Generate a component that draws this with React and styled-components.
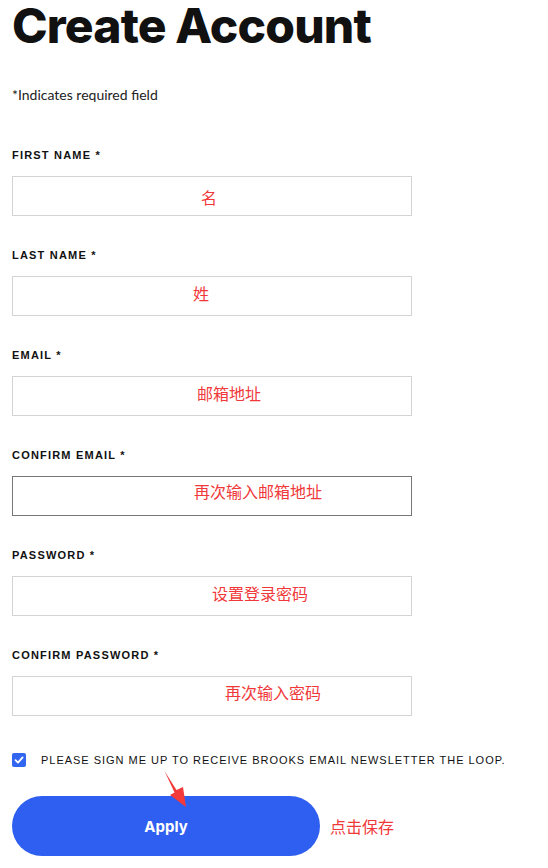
import React from 'react'
import styled, { createGlobalStyle } from 'styled-components'

const GlobalStyle = createGlobalStyle`
body {
    margin: 0;
    background: #fff;
    font-family: "Liberation Sans", Arial, sans-serif;
    color: #111;
}
`

const Page = styled.div`
position: relative;
width: 548px;
height: 868px;
padding: 0 12px;
box-sizing: border-box;
overflow: hidden;
`

const Title = styled.h1`
margin: 0;
padding-top: 2px;
font-family: "Inter", sans-serif;
font-weight: 800;
font-size: 48px;
line-height: 48px;
letter-spacing: -0.85px;
color: #111;
`

const Note = styled.p`
margin: 36px 0 0;
font-family: "Lato", sans-serif;
font-size: 14px;
line-height: 18px;
color: #222;
`

const Form = styled.div`
margin-top: 43px;
`

const Field = styled.div`
margin-bottom: 31px;
`

const Label = styled.div`
font-size: 11px;
font-weight: 700;
line-height: 16px;
letter-spacing: 1.2px;
margin-bottom: 13px;
color: #111;
`

const InputBox = styled.div`
width: 400px;
height: 40px;
box-sizing: border-box;
border: 1px solid ${p => (p.$focus ? '#777' : '#d3d3d3')};
display: flex;
align-items: center;
`

const Hint = styled.span`
margin-left: ${p => p.$offset}px;
margin-top: ${p => p.$shift * 2}px;
font-family: "Noto Sans CJK SC", sans-serif;
font-size: 16px;
color: #f0383a;
`

const CheckRow = styled.label`
display: flex;
align-items: center;
gap: 15px;
margin-top: 36px;
height: 16px;
`

const Box = styled.span`
width: 14px;
height: 14px;
border-radius: 2px;
background: #3366f0;
display: flex;
align-items: center;
justify-content: center;
`

const CheckText = styled.span`
font-size: 11px;
letter-spacing: 0.98px;
color: #111;
`

const Actions = styled.div`
display: flex;
align-items: center;
gap: 10px;
margin-top: 28px;
`

const Button = styled.button`
width: 308px;
height: 60px;
border: none;
border-radius: 30px;
background: #2f5ff0;
color: #fff;
font-family: "Inter", sans-serif;
font-size: 15px;
font-weight: 700;
cursor: pointer;
`

const Aside = styled.span`
font-family: "Noto Sans CJK SC", sans-serif;
font-size: 16px;
color: #f0383a;
`

const Arrow = styled.svg`
position: absolute;
left: 0;
top: 0;
pointer-events: none;
`

const fields = [
    { label: 'FIRST NAME *', hint: '名', offset: 188, shift: 1 },
    { label: 'LAST NAME *', hint: '姓', offset: 180, shift: -3 },
    { label: 'EMAIL *', hint: '邮箱地址', offset: 184, shift: -3 },
    { label: 'CONFIRM EMAIL *', hint: '再次输入邮箱地址', offset: 181, shift: -5, focus: true },
    { label: 'PASSWORD *', hint: '设置登录密码', offset: 199, shift: -3 },
    { label: 'CONFIRM PASSWORD *', hint: '再次输入密码', offset: 212, shift: -4 },
]

const App = () => {
    return (
        <Page>
            <GlobalStyle />
            <Title>Create Account</Title>
            <Note>*Indicates required field</Note>
            <Form>
                {fields.map(f => (
                    <Field key={f.label}>
                        <Label>{f.label}</Label>
                        <InputBox $focus={f.focus}>
                            <Hint $offset={f.offset} $shift={f.shift}>{f.hint}</Hint>
                        </InputBox>
                    </Field>
                ))}
            </Form>
            <CheckRow>
                <Box>
                    <svg width="10" height="10" viewBox="0 0 10 10">
                        <path d="M1.5 5.2 L4 7.6 L8.6 2.4" fill="none" stroke="#fff" strokeWidth="1.8" strokeLinecap="round" strokeLinejoin="round" />
                    </svg>
                </Box>
                <CheckText>PLEASE SIGN ME UP TO RECEIVE BROOKS EMAIL NEWSLETTER THE LOOP.</CheckText>
            </CheckRow>
            <Actions>
                <Button>Apply</Button>
                <Aside>点击保存</Aside>
            </Actions>
            <Arrow width="548" height="868" viewBox="0 0 548 868">
                <polygon points="164.5,771 176.5,790 183,787 186,807 170,795 174.5,792.5" fill="#f23a3a" />
            </Arrow>
        </Page>
    )
}

export default App
